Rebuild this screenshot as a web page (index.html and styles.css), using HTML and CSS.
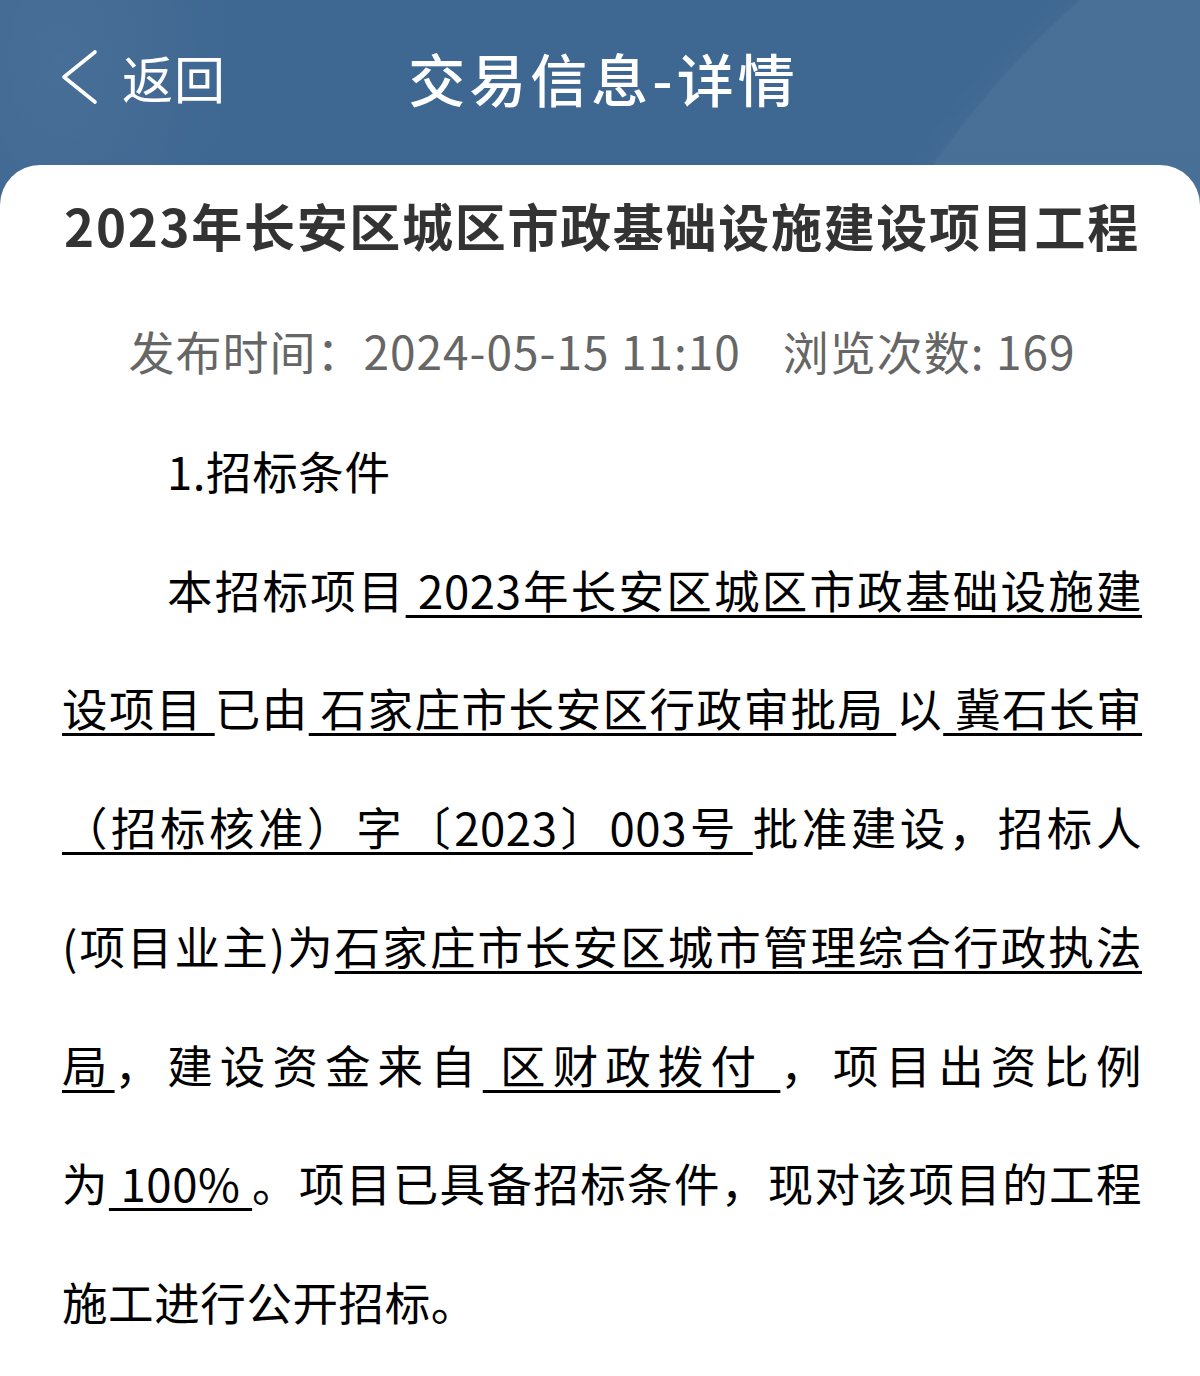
FILE: index.html
```html
<!DOCTYPE html>
<html lang="zh-CN">
<head>
<meta charset="utf-8">
<title>交易信息-详情</title>
<link rel="stylesheet" href="styles.css">
</head>
<body>
<div class="page">
  <header class="topbar">
    <a class="back">
      <svg class="back-icon" viewBox="0 0 38 56" aria-hidden="true"><path d="M35 3 L4 28 L35 53"/></svg>
      <span class="back-text">返回</span>
    </a>
    <h1 class="bar-title">交易信息-详情</h1>
    <span class="bar-spacer"></span>
  </header>
  <main class="card">
    <h2 class="title">2023年长安区城区市政基础设施建设项目工程</h2>
    <p class="meta"><span>发布时间：2024-05-15 11:10</span><span class="views">浏览次数: 169</span></p>
    <div class="content">
      <p class="heading">1.招标条件</p>
      <p class="para">本招标项目<u> 2023年长安区城区市政基础设施建设项目 </u>已由<u> 石家庄市长安区行政审批局 </u>以<u> 冀石长审（招标核准）字〔2023〕003号 </u>批准建设，招标人<span class="keep">(项目业主)</span>为<u>石家庄市长安区城市管理综合行政执法局</u>，建设资金来自<u> 区财政拨付 </u>，项目出资比例为<u>&nbsp;100%&nbsp;</u>。项目已具备招标条件，现对该项目的工程施工进行公开招标。</p>
    </div>
  </main>
</div>
</body>
</html>
```
FILE: styles.css
```css
html, body {
  margin: 0;
  padding: 0;
}

body {
  font-family: "Noto Sans CJK SC", "Noto Sans", sans-serif;
  background: #ffffff;
}

.page {
  min-height: 1376px;
  display: flex;
  flex-direction: column;
  background:
    radial-gradient(circle at 1700px 700px, rgba(255, 255, 255, 0.06) 0 934px, rgba(255, 255, 255, 0.02) 936px, transparent 960px),
    radial-gradient(circle at 1800px 640px, rgba(255, 255, 255, 0.04) 0 720px, transparent 722px),
    radial-gradient(ellipse 260px 420px at 60px 60px, rgba(255, 255, 255, 0.05), transparent 70%),
    linear-gradient(180deg, #3e6791 0%, #3a6390 100%);
}

.topbar {
  height: 165px;
  box-sizing: border-box;
  padding: 0 0 12px 0;
  display: grid;
  grid-template-columns: 1fr auto 1fr;
  align-items: center;
  color: #ffffff;
}

.back {
  display: flex;
  align-items: center;
  padding-left: 60px;
  gap: 24px;
}

.back-icon {
  width: 38px;
  height: 56px;
  fill: none;
  stroke: #ffffff;
  stroke-width: 3.6;
  stroke-linecap: round;
  stroke-linejoin: round;
}

.back-text {
  font-size: 51px;
  line-height: 60px;
  letter-spacing: 1px;
}

.bar-title {
  margin: 0;
  padding-left: 7px;
  font-size: 57px;
  font-weight: 500;
  line-height: 70px;
  letter-spacing: 4px;
  text-align: center;
}

.card {
  flex: 1;
  background: #ffffff;
  border-radius: 40px 40px 0 0;
  padding: 25px 58px 0 62px;
}

.title {
  margin: 0 -30px;
  font-size: 51px;
  font-weight: 700;
  line-height: 70px;
  letter-spacing: 1.7px;
  color: #333333;
  text-align: center;
  white-space: nowrap;
}

.meta {
  margin: 60px 0 0 0;
  font-size: 46px;
  line-height: 60px;
  color: #666666;
  text-align: center;
  letter-spacing: 1px;
}

.views {
  margin-left: 42px;
}

.content {
  margin-top: 31px;
  color: #000000;
  font-size: 45.5px;
  line-height: 118.7px;
  letter-spacing: 0.6px;
  text-spacing-trim: space-all;
}

.content p {
  margin: 0;
}

.heading {
  text-indent: 105px;
}

.para {
  text-align: justify;
  text-indent: 105px;
}

.para u {
  text-decoration: underline;
  text-decoration-thickness: 3px;
  text-underline-offset: 6px;
}

.keep {
  white-space: nowrap;
}
```
